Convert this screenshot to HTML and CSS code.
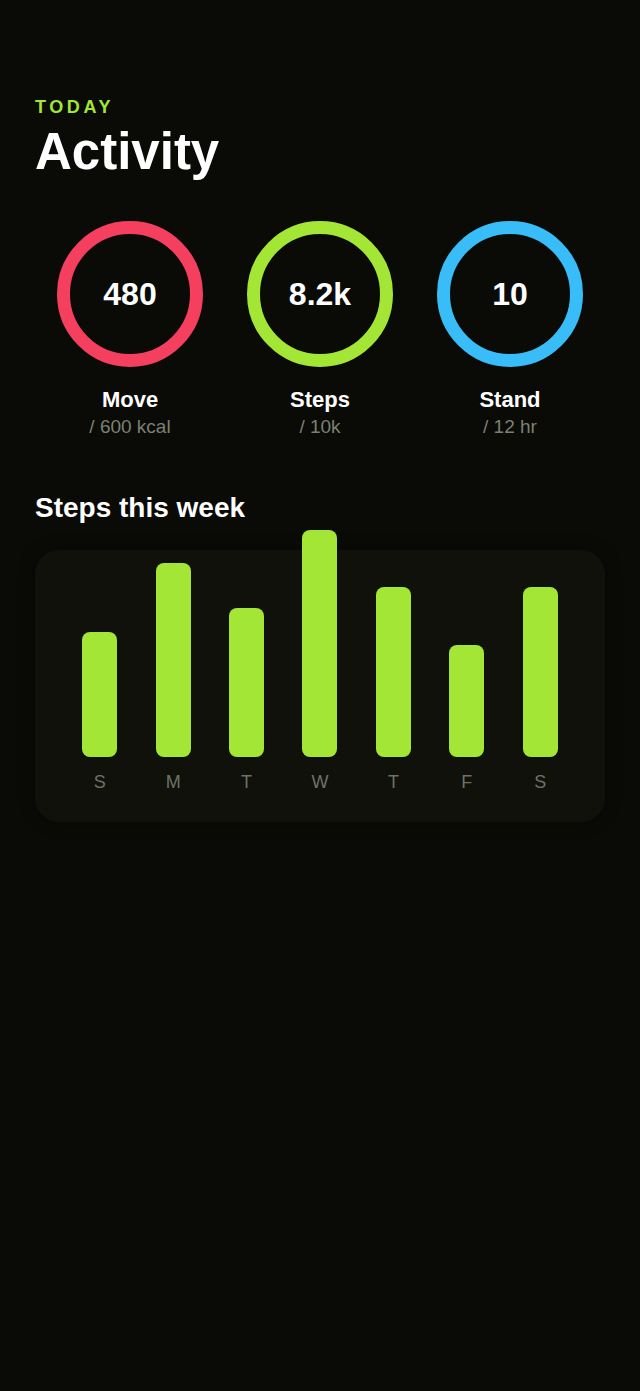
FILE: index.html
```html
<!DOCTYPE html>
<html lang="en">
<head>
<meta charset="utf-8">
<title>Activity</title>
<link rel="stylesheet" href="styles.css">
</head>
<body>
<main class="page">
  <header class="head">
    <div class="eyebrow">TODAY</div>
    <h1 class="title">Activity</h1>
  </header>

  <section class="rings">
    <div class="ring-item">
      <div class="ring ring-move"><span class="ring-value">480</span></div>
      <div class="ring-label">Move</div>
      <div class="ring-goal">/ 600 kcal</div>
    </div>
    <div class="ring-item">
      <div class="ring ring-steps"><span class="ring-value">8.2k</span></div>
      <div class="ring-label">Steps</div>
      <div class="ring-goal">/ 10k</div>
    </div>
    <div class="ring-item">
      <div class="ring ring-stand"><span class="ring-value">10</span></div>
      <div class="ring-label">Stand</div>
      <div class="ring-goal">/ 12 hr</div>
    </div>
  </section>

  <h2 class="section-title">Steps this week</h2>
  <section class="card">
    <div class="chart">
      <div class="col"><div class="bar" style="height:125px"></div></div>
      <div class="col"><div class="bar" style="height:194px"></div></div>
      <div class="col"><div class="bar" style="height:149px"></div></div>
      <div class="col"><div class="bar" style="height:227px"></div></div>
      <div class="col"><div class="bar" style="height:170px"></div></div>
      <div class="col"><div class="bar" style="height:112px"></div></div>
      <div class="col"><div class="bar" style="height:170px"></div></div>
    </div>
    <div class="days">
      <span class="day">S</span>
      <span class="day">M</span>
      <span class="day">T</span>
      <span class="day">W</span>
      <span class="day">T</span>
      <span class="day">F</span>
      <span class="day">S</span>
    </div>
  </section>
</main>
</body>
</html>
```

FILE: styles.css
```css
html, body {
  margin: 0;
  padding: 0;
  background: #0a0b07;
}

body {
  font-family: "Liberation Sans", Arial, sans-serif;
  color: #ffffff;
  min-height: 1391px;
}

.page {
  padding: 96px 35px 40px;
}

.head {
  display: flex;
  flex-direction: column;
  gap: 4px;
}

.eyebrow {
  font-size: 18px;
  line-height: 22px;
  font-weight: 700;
  letter-spacing: 0.2em;
  color: #a3e635;
}

.title {
  margin: 0;
  font-size: 51px;
  line-height: 60px;
  font-weight: 700;
}

.rings {
  display: grid;
  grid-template-columns: repeat(3, 1fr);
  margin-top: 39px;
}

.ring-item {
  display: flex;
  flex-direction: column;
  align-items: center;
}

.ring {
  width: 146px;
  height: 146px;
  box-sizing: border-box;
  border-radius: 50%;
  border: 13px solid;
  display: flex;
  align-items: center;
  justify-content: center;
}

.ring-move { border-color: #f43f5e; }
.ring-steps { border-color: #a3e635; }
.ring-stand { border-color: #38bdf8; }

.ring-value {
  font-size: 32px;
  font-weight: 700;
  line-height: 36px;
}

.ring-label {
  margin-top: 21px;
  font-size: 22px;
  line-height: 24px;
  font-weight: 700;
}

.ring-goal {
  margin-top: 4px;
  font-size: 19px;
  line-height: 22px;
  color: #7c8072;
}

.section-title {
  margin: 54px 0 0;
  font-size: 28px;
  line-height: 32px;
  font-weight: 700;
}

.card {
  margin-top: 26px;
  background: #0f110a;
  border-radius: 24px;
  padding: 24px 28px 29px;
  box-shadow: 0 0 16px rgba(0, 0, 0, 0.35);
}

.chart {
  display: flex;
  align-items: flex-end;
  height: 183px;
}

.col {
  flex: 1;
  display: flex;
  justify-content: center;
  align-items: flex-end;
}

.bar {
  width: 35px;
  background: #a3e635;
  border-radius: 8px;
}

.days {
  display: flex;
  margin-top: 14px;
}

.day {
  flex: 1;
  text-align: center;
  font-size: 18px;
  line-height: 22px;
  color: #6e7165;
}
```
